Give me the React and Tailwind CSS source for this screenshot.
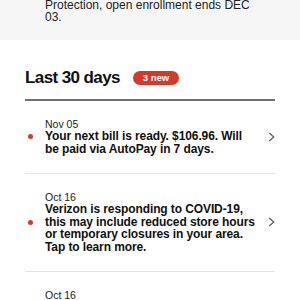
import React from "react";

function Chevron() {
  return (
    <svg width="7" height="10" viewBox="0 0 7 10" className="shrink-0">
      <path d="M1.2 1 L5.8 5 L1.2 9" fill="none" stroke="#555" strokeWidth="1.1" />
    </svg>
  );
}

function Item({ date, text }) {
  return (
    <div className="flex items-center px-[25px] py-[17.5px]">
      <div className="w-[20px] shrink-0">
        <div className="ml-[2.5px] h-[5px] w-[5px] rounded-full bg-[#d03b2c]" />
      </div>
      <div className="w-[212px]">
        <div className="text-[10.5px] leading-[12px] text-[#222]">{date}</div>
        <div className="text-[12px] font-bold leading-[12.5px] tracking-[-0.1px] text-[#111]">
          {text}
        </div>
      </div>
      <div className="ml-auto">
        <Chevron />
      </div>
    </div>
  );
}

export default function App() {
  return (
    <div
      className="h-[300px] w-[300px] overflow-hidden bg-white"
      style={{ fontFamily: '"Liberation Sans", Arial, sans-serif' }}
    >
      <div className="h-[41px] bg-[#f6f6f6]">
        <div className="flex items-start px-[25px] -mt-[1px]">
          <div className="ml-[20px] w-[212px] text-[12px] leading-[12.3px] text-[#222]">
            Protection, open enrollment ends DEC 03.
          </div>
          <div className="ml-auto -mt-[9px]">
            <Chevron />
          </div>
        </div>
      </div>
      <div className="flex items-center gap-[13px] px-[25px] pt-[28px] pb-[11px]">
        <div className="text-[17px] font-bold leading-[20px] tracking-[-0.6px] text-[#111]">
          Last 30 days
        </div>
        <div className="flex h-[14px] items-center rounded-full bg-[#d03b2c] px-[10px] text-[9.5px] font-bold text-white">
          3 new
        </div>
      </div>
      <div className="mx-[25px] h-[1.5px] bg-[#6f6f6f]" />
      <Item date="Nov 05" text="Your next bill is ready. $106.96. Will be paid via AutoPay in 7 days." />
      <div className="mx-[25px] h-px bg-[#e4e4e4]" />
      <Item
        date="Oct 16"
        text="Verizon is responding to COVID-19, this may include reduced store hours or temporary closures in your area. Tap to learn more."
      />
      <div className="mx-[25px] h-px bg-[#e4e4e4]" />
      <Item
        date="Oct 16"
        text="Your order has shipped. Track your package to see when it will arrive."
      />
    </div>
  );
}
